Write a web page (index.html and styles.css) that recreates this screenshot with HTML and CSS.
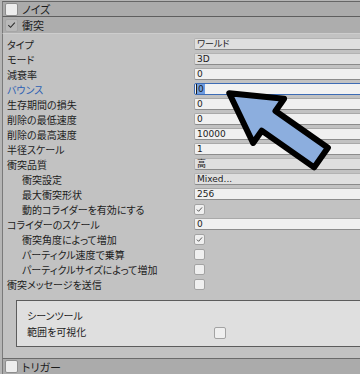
FILE: index.html
```html
<!DOCTYPE html>
<html lang="ja">
<head>
<meta charset="utf-8">
<link rel="stylesheet" href="styles.css">
</head>
<body>
<div class="inspector">
  <div class="header h-noise"><span class="hcb"></span><span class="htext">ノイズ</span></div>
  <div class="header h-collision"><span class="hcb on"><svg viewBox="0 0 12 12" width="12" height="12"><path d="M2.5 6.2 L5 8.6 L9.6 3.4" fill="none" stroke="#2a2a2a" stroke-width="1.1"/></svg></span><span class="htext">衝突</span></div>
  <div class="content">
    <div class="row"><span class="label">タイプ</span><span class="field dd">ワールド</span></div>
    <div class="row"><span class="label">モード</span><span class="field dd">3D</span></div>
    <div class="row"><span class="label">減衰率</span><span class="field">0</span></div>
    <div class="row"><span class="label active">バウンス</span><span class="field focus"><span class="sel">0</span></span></div>
    <div class="row"><span class="label">生存期間の損失</span><span class="field">0</span></div>
    <div class="row"><span class="label">削除の最低速度</span><span class="field">0</span></div>
    <div class="row"><span class="label">削除の最高速度</span><span class="field">10000</span></div>
    <div class="row"><span class="label">半径スケール</span><span class="field">1</span></div>
    <div class="row"><span class="label">衝突品質</span><span class="field dd">高</span></div>
    <div class="row"><span class="label indent">衝突設定</span><span class="field dd">Mixed...</span></div>
    <div class="row"><span class="label indent">最大衝突形状</span><span class="field">256</span></div>
    <div class="row"><span class="label indent">動的コライダーを有効にする</span><span class="cb"><svg viewBox="0 0 11 11" width="11" height="11"><path d="M2.3 5.6 L4.4 7.7 L8.6 3" fill="none" stroke="#333" stroke-width="1"/></svg></span></div>
    <div class="row"><span class="label">コライダーのスケール</span><span class="field">0</span></div>
    <div class="row"><span class="label indent">衝突角度によって増加</span><span class="cb"><svg viewBox="0 0 11 11" width="11" height="11"><path d="M2.3 5.6 L4.4 7.7 L8.6 3" fill="none" stroke="#333" stroke-width="1"/></svg></span></div>
    <div class="row"><span class="label indent">パーティクル速度で乗算</span><span class="cb"></span></div>
    <div class="row"><span class="label indent">パーティクルサイズによって増加</span><span class="cb"></span></div>
    <div class="row"><span class="label">衝突メッセージを送信</span><span class="cb"></span></div>
    <div class="scene-box">
      <div class="box-row"><span class="label">シーンツール</span></div>
      <div class="box-row"><span class="label">範囲を可視化</span><span class="cb big"></span></div>
    </div>
  </div>
  <div class="header h-trigger"><span class="hcb"></span><span class="htext">トリガー</span></div>
</div>
<svg class="arrow" width="360" height="374" viewBox="0 0 360 374">
  <g transform="translate(226 91) rotate(35)">
    <polygon points="4,0 52,-27 52,-12 116,-12 116,12 52,12 52,27" fill="#8caede" stroke="#000" stroke-width="6" stroke-linejoin="round"/>
  </g>
</svg>
</body>
</html>
```

FILE: styles.css
```css
html, body {
  margin: 0;
  padding: 0;
}
body {
  width: 360px;
  height: 374px;
  overflow: hidden;
  background: #c2c2c2;
  position: relative;
  font-family: "Noto Sans CJK JP", sans-serif;
  font-feature-settings: "palt";
  color: #1c1c1c;
}
.inspector {
  padding-top: 1px;
  background: #b5b5b5;
}
.header {
  display: flex;
  align-items: center;
  background: #ababab;
  margin-left: 2px;
  border-left: 1px solid #7a7a7a;
  font-size: 11px;
}
.h-noise {
  height: 14px;
  border-top: 1px solid #666;
  border-bottom: 1px solid #5e5e5e;
}
.h-collision {
  height: 16px;
  background: #adadad;
  border-bottom: 1px solid #cdcdcd;
}
.h-trigger {
  height: 15px;
  border-top: 1px solid #6a6a6a;
}
.hcb {
  width: 11px;
  height: 11px;
  margin-left: 2px;
  margin-right: 4px;
  border: 1px solid #8e8e8e;
  border-radius: 2px;
  background: #ededed;
  display: flex;
  align-items: center;
  justify-content: center;
}
.hcb.on {
  background: #b9b9b9;
  border-color: #a6a6a6;
}
.htext {
  line-height: 14px;
}
.content {
  background: #c2c2c2;
  margin-left: 2px;
  border-left: 1px solid #7a7a7a;
  padding: 3px 0 11px 4px;
}
.row {
  display: grid;
  grid-template-columns: 187px 170px;
  height: 15px;
  align-items: start;
}
.label {
  font-size: 10px;
  line-height: 15px;
  white-space: nowrap;
}
.label.indent {
  padding-left: 15px;
}
.label.active {
  color: #2c5fb3;
}
.field {
  margin-top: 1px;
  height: 10px;
  box-sizing: content-box;
  border: 1px solid #a9a9a9;
  border-bottom-color: #8c8c8c;
  border-radius: 2px;
  background: #f0f0f0;
  font-family: "DejaVu Sans", "Noto Sans CJK JP", sans-serif;
  font-size: 9px;
  line-height: 10px;
  padding-left: 2px;
  white-space: nowrap;
}
.field.dd {
  background: #dfdfdf;
  border-color: #b3b3b3;
  border-bottom-color: #8a8a8a;
}
.field.focus {
  border: 1px solid #3d6cb5;
  padding-left: 1px;
  background: #f2f2f2;
}
.sel {
  display: inline-block;
  background: #6e9ce0;
  border-left: 1px solid #1c1c1c;
  padding: 0 1px;
}
.cb {
  margin-top: 2px;
  width: 9px;
  height: 9px;
  box-sizing: content-box;
  border: 1px solid #a3a3a3;
  border-radius: 2px;
  background: #efefef;
  display: flex;
  align-items: center;
  justify-content: center;
}
.cb.big {
  width: 10px;
  height: 10px;
}
.scene-box {
  margin: 8px -10px 0 9px;
  background: #dfdfdf;
  border: 1px solid #5c5c5c;
  padding: 7px 0 6px 10px;
}
.box-row {
  display: grid;
  grid-template-columns: 187px auto;
  height: 16px;
  align-items: center;
}
.box-row .label {
  line-height: 16px;
}
.arrow {
  position: absolute;
  left: 0;
  top: 0;
  pointer-events: none;
}
```
